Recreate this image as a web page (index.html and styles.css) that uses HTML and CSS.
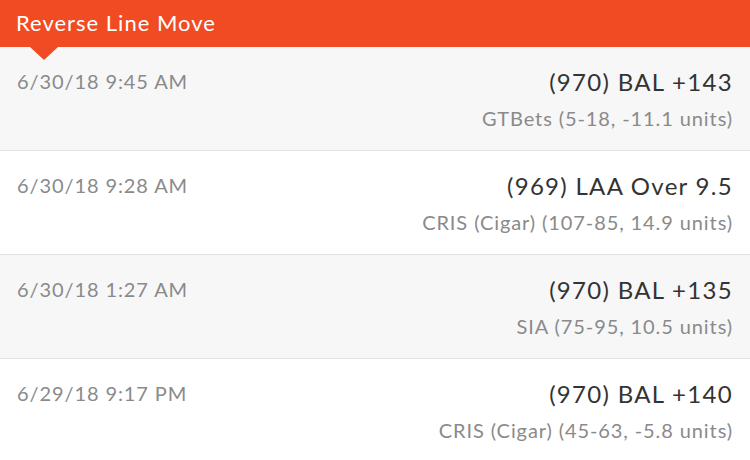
FILE: index.html
```html
<!DOCTYPE html>
<html lang="en">
<head>
    <meta charset="UTF-8">
    <meta name="viewport" content="width=device-width, initial-scale=1.0">
    <title>Reverse Line Move</title>
    <link rel="stylesheet" href="styles.css">
</head>
<body>
    <div class="header">Reverse Line Move</div>
    <ul class="moves">
        <li class="move">
            <span class="date">6/30/18 9:45 AM</span>
            <div class="pick">
                <span class="line">(970) BAL +143</span>
                <span class="book">GTBets (5-18, -11.1 units)</span>
            </div>
        </li>
        <li class="move">
            <span class="date">6/30/18 9:28 AM</span>
            <div class="pick">
                <span class="line">(969) LAA Over 9.5</span>
                <span class="book">CRIS (Cigar) (107-85, 14.9 units)</span>
            </div>
        </li>
        <li class="move">
            <span class="date">6/30/18 1:27 AM</span>
            <div class="pick">
                <span class="line">(970) BAL +135</span>
                <span class="book">SIA (75-95, 10.5 units)</span>
            </div>
        </li>
        <li class="move">
            <span class="date">6/29/18 9:17 PM</span>
            <div class="pick">
                <span class="line">(970) BAL +140</span>
                <span class="book">CRIS (Cigar) (45-63, -5.8 units)</span>
            </div>
        </li>
    </ul>
</body>
</html>
```

FILE: styles.css
```css
body {
    margin: 0;
    font-family: Lato, "Open Sans", sans-serif;
    background-color: white;
    overflow: hidden;
}
.header {
    position: relative;
    height: 47px;
    line-height: 45px;
    padding-left: 16px;
    background-color: #f04b23;
    color: white;
    font-size: 22px;
    letter-spacing: 1px;
}
/* little pointer under the title */
.header::after {
    content: "";
    position: absolute;
    left: 30px;
    top: 47px;
    border-left: 14px solid transparent;
    border-right: 14px solid transparent;
    border-top: 13px solid #f04b23;
}
.moves {
    list-style: none;
    margin: 0;
    padding: 0;
}
.move {
    display: flex;
    justify-content: space-between;
    height: 103px;
    padding: 0 17px 0 17px;
    border-bottom: 1px solid #e2e2e2;
}
.move:nth-child(odd) {
    background-color: #f7f7f7;
}
.date {
    padding-top: 22px;
    font-size: 20px;
    letter-spacing: 0.9px;
    color: #8a8a8a;
}
.pick {
    display: flex;
    flex-direction: column;
    align-items: flex-end;
    padding-top: 20px;
}
.line {
    font-size: 24px;
    letter-spacing: 1.3px;
    color: #333;
}
.book {
    margin-top: 10px;
    font-size: 20px;
    letter-spacing: 0.9px;
    color: #8a8a8a;
}
```
